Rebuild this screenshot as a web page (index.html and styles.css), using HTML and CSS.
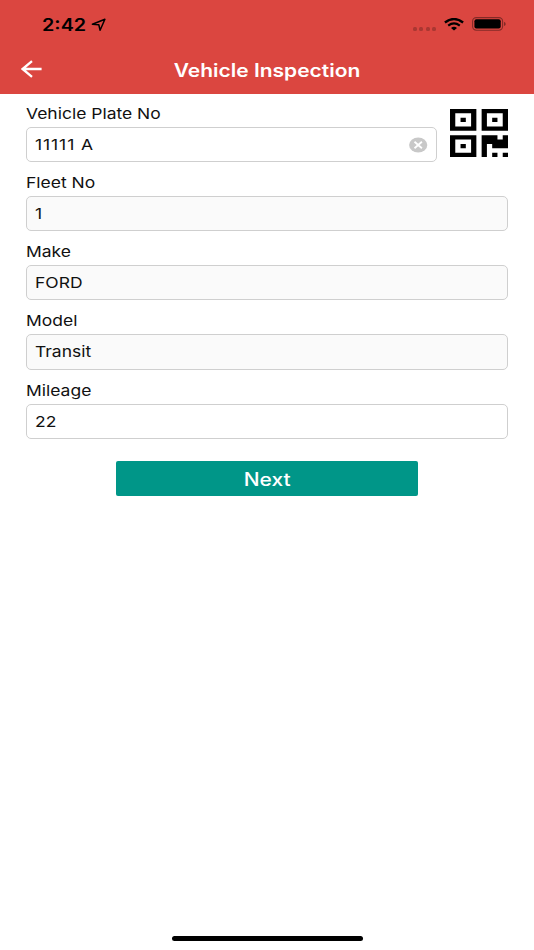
FILE: index.html
```
<!DOCTYPE html>
<html lang="en">
<head>
    <meta charset="UTF-8">
    <meta name="viewport" content="width=device-width, initial-scale=1.0">
    <title>Vehicle Inspection</title>
    <link rel="stylesheet" href="styles.css">
</head>
<body>
    <header>
        <div class="status-bar">
            <span class="time wide">2:42</span>
            <svg class="location" width="16" height="14" viewBox="0 0 16 14">
                <path d="M1.4 6.3 L13.9 1.3 L9.1 12.2 L7.8 6.8 Z" fill="none" stroke="#000" stroke-width="1.5" stroke-linejoin="round"/>
            </svg>
            <div class="dots"><i></i><i></i><i></i><i></i></div>
            <svg class="wifi" width="20" height="13" viewBox="0 0 20 13">
                <path d="M.9 4.5 Q10 -2.4 19.1 4.5" fill="none" stroke="#000" stroke-width="2.4"/>
                <path d="M4.2 7.6 Q10 3.2 15.8 7.6" fill="none" stroke="#000" stroke-width="2.2"/>
                <path d="M7 9.9 Q10 7.8 13 9.9 L10 12.5 Z"/>
            </svg>
            <svg class="battery" width="34" height="14" viewBox="0 0 34 14">
                <rect x=".6" y=".6" width="30" height="12.6" rx="3.6" fill="none" stroke="#000" stroke-opacity=".4" stroke-width="1.1"/>
                <rect x="2.4" y="2.3" width="26.3" height="9.2" rx="2"/>
                <path d="M32.2 4.8 Q33.6 5.6 33.6 6.9 Q33.6 8.2 32.2 9 Z" fill-opacity=".5"/>
            </svg>
        </div>
        <div class="nav">
            <svg class="back" width="22" height="18" viewBox="0 0 22 18">
                <path d="M20.6 9 H2 M11 1.2 L1.6 9 L11 16.8" fill="none" stroke="#fff" stroke-width="2.3"/>
            </svg>
            <h1><span class="wide">Vehicle Inspection</span></h1>
        </div>
    </header>

    <div class="form">
        <div class="plate-row">
            <div class="field plate">
                <div class="label"><span class="wide">Vehicle Plate No</span></div>
                <div class="input">
                    <span class="wide">11111 A</span>
                    <svg class="clear" width="19" height="16" viewBox="0 0 19 16">
                        <ellipse cx="9.2" cy="8" rx="9.1" ry="7.6" fill="#c8c8c8"/>
                        <path d="M5.5 4.8 L12.9 11.2 M12.9 4.8 L5.5 11.2" stroke="#fff" stroke-width="1.8"/>
                    </svg>
                </div>
            </div>
            <svg class="qr" width="58" height="48" viewBox="0 0 11 11" preserveAspectRatio="none">
                <path fill-rule="evenodd" d="M0 0h5v5h-5z M1 1h3v3h-3z M2 2h1v1h-1z
                    M6 0h5v5h-5z M7 1h3v3h-3z M8 2h1v1h-1z
                    M0 6h5v5h-5z M1 7h3v3h-3z M2 8h1v1h-1z"/>
                <path d="M6 6h3v1h1v-1h1v3h-3v-1h-1v3h-1z M8 10h1v1h-1z M10 10h1v1h-1z"/>
            </svg>
        </div>
        <div class="field">
            <div class="label"><span class="wide">Fleet No</span></div>
            <div class="input disabled"><span class="wide">1</span></div>
        </div>
        <div class="field">
            <div class="label"><span class="wide">Make</span></div>
            <div class="input disabled"><span class="wide">FORD</span></div>
        </div>
        <div class="field model">
            <div class="label"><span class="wide">Model</span></div>
            <div class="input disabled"><span class="wide">Transit</span></div>
        </div>
        <div class="field">
            <div class="label"><span class="wide">Mileage</span></div>
            <div class="input"><span class="wide">22</span></div>
        </div>
        <button type="button"><span class="wide">Next</span></button>
    </div>

    <div class="home-bar"></div>
</body>
</html>
```
FILE: styles.css
```
* {
    box-sizing: border-box;
}
body {
    font-family: Inter, "Liberation Sans", sans-serif;
    background-color: #fff;
    color: #111;
    margin: 0;
    height: 950px;
    display: flex;
    flex-direction: column;
}
header {
    background-color: #db4640;
    height: 94px;
}
/* the system font is drawn wider than normal */
.wide {
    display: inline-block;
    transform: scaleX(1.165);
    transform-origin: left center;
    white-space: nowrap;
}
.status-bar {
    display: flex;
    align-items: center;
    height: 48px;
    padding-left: 42px;
    padding-right: 28px;
}
.time {
    color: #000;
    font-size: 17px;
    font-weight: 600;
    width: 49px;
    padding-top: 1px;
}
.location {
    margin-top: 1px;
}
.dots {
    display: flex;
    gap: 2.5px;
    margin-left: auto;
    margin-top: 9px;
}
.dots i {
    width: 4px;
    height: 4px;
    border-radius: 1.5px;
    background-color: #aa3732;
}
.wifi {
    margin-left: 8px;
}
.battery {
    margin-left: 8px;
}
.nav {
    display: flex;
    align-items: center;
    height: 46px;
    padding: 0 21px;
}
.back {
    margin-top: -5px;
}
h1 {
    flex: 1;
    margin: 0;
    padding-right: 22px;
    color: #fff;
    font-size: 18px;
    font-weight: 600;
    line-height: 44px;
    text-align: center;
}
h1 .wide, button .wide {
    transform-origin: center;
}
.form {
    flex: 1;
    padding: 0 26px;
}
.plate-row {
    display: flex;
}
.plate {
    width: 411px;
}
.label {
    height: 34px;
    padding-top: 9.5px;
    font-size: 15px;
    line-height: 22px;
}
.plate .label {
    height: 33px;
    padding-top: 9px;
}
.input {
    display: flex;
    align-items: center;
    justify-content: space-between;
    height: 35px;
    padding: 0 8px;
    border: 1px solid #cfcfcf;
    border-radius: 5px;
    font-size: 15px;
}
.plate .input .wide {
    letter-spacing: 0.8px;
}
.model .input {
    height: 36px;
    padding-bottom: 1px;
}
.disabled {
    background-color: #fafafa;
}
.qr {
    margin: 15px 0 0 13px;
}
button {
    display: block;
    width: 302px;
    height: 35px;
    margin: 22px auto 0;
    padding: 1px 0 0;
    border: none;
    border-radius: 2px;
    background-color: #009688;
    color: #fff;
    font-family: inherit;
    font-size: 18px;
    font-weight: 500;
}
.home-bar {
    width: 191px;
    height: 5px;
    margin: 0 auto 9px;
    border-radius: 3px;
    background-color: #000;
}
```
